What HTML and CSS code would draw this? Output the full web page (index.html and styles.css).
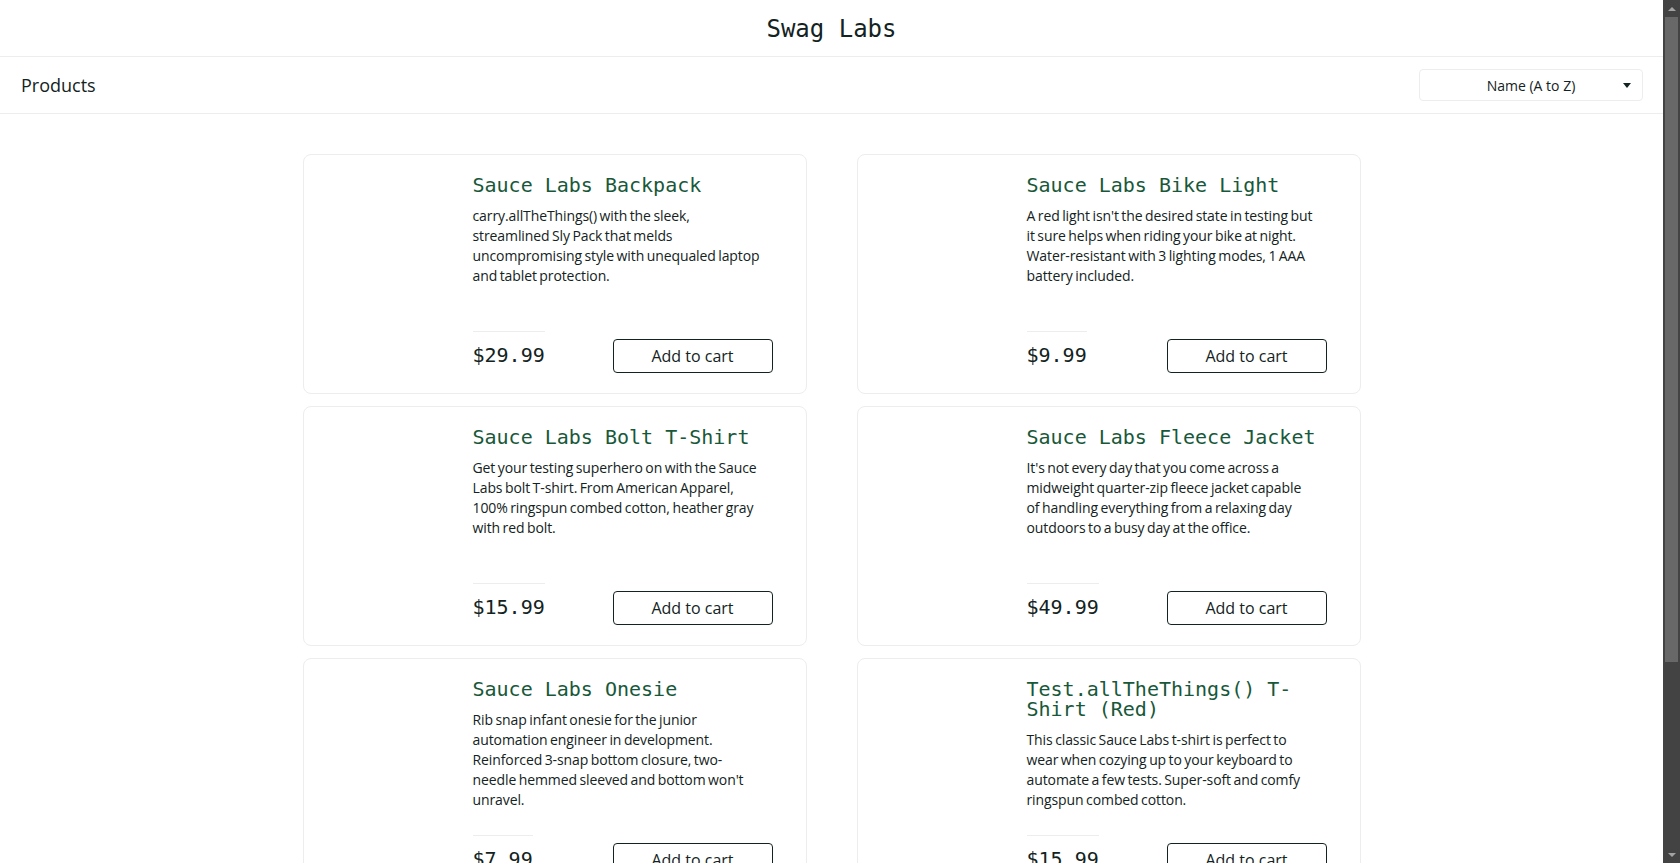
FILE: index.html
```html
<!DOCTYPE html>
<html lang="en">
<head>
<meta charset="utf-8">
<title>Swag Labs</title>
<link rel="stylesheet" href="styles.css">
</head>
<body>
<div class="app">
  <div class="page">
    <header class="primary-header">
      <div class="app-logo">Swag Labs</div>
    </header>
    <div class="secondary-header">
      <span class="title">Products</span>
      <div class="sort">
        <span></span>
        <span class="sort-label">Name (A to Z)</span>
        <svg class="sort-caret" width="8" height="5" viewBox="0 0 8 5"><path d="M0 0H8L4 5Z" fill="#132322"/></svg>
      </div>
    </div>
    <main class="inventory">
      <div class="inventory-list">
        <div class="item">
          <div class="item-img"></div>
          <div class="item-details">
            <div class="item-name">Sauce Labs Backpack</div>
            <div class="item-desc">carry.allTheThings() with the sleek, streamlined Sly Pack that melds uncompromising style with unequaled laptop and tablet protection.</div>
            <div class="pricebar">
              <div class="item-price">$29.99</div>
              <button class="btn">Add to cart</button>
            </div>
          </div>
        </div>
        <div class="item">
          <div class="item-img"></div>
          <div class="item-details">
            <div class="item-name">Sauce Labs Bike Light</div>
            <div class="item-desc">A red light isn't the desired state in testing but it sure helps when riding your bike at night. Water-resistant with 3 lighting modes, 1 AAA battery included.</div>
            <div class="pricebar">
              <div class="item-price">$9.99</div>
              <button class="btn">Add to cart</button>
            </div>
          </div>
        </div>
        <div class="item">
          <div class="item-img"></div>
          <div class="item-details">
            <div class="item-name">Sauce Labs Bolt T-Shirt</div>
            <div class="item-desc">Get your testing superhero on with the Sauce Labs bolt T-shirt. From American Apparel, 100% ringspun combed cotton, heather gray with red bolt.</div>
            <div class="pricebar">
              <div class="item-price">$15.99</div>
              <button class="btn">Add to cart</button>
            </div>
          </div>
        </div>
        <div class="item">
          <div class="item-img"></div>
          <div class="item-details">
            <div class="item-name">Sauce Labs Fleece Jacket</div>
            <div class="item-desc">It's not every day that you come across a midweight quarter-zip fleece jacket capable of handling everything from a relaxing day outdoors to a busy day at the office.</div>
            <div class="pricebar">
              <div class="item-price">$49.99</div>
              <button class="btn">Add to cart</button>
            </div>
          </div>
        </div>
        <div class="item">
          <div class="item-img"></div>
          <div class="item-details">
            <div class="item-name">Sauce Labs Onesie</div>
            <div class="item-desc">Rib snap infant onesie for the junior automation engineer in development. Reinforced 3-snap bottom closure, two-needle hemmed sleeved and bottom won't unravel.</div>
            <div class="pricebar">
              <div class="item-price">$7.99</div>
              <button class="btn">Add to cart</button>
            </div>
          </div>
        </div>
        <div class="item">
          <div class="item-img"></div>
          <div class="item-details">
            <div class="item-name">Test.allTheThings() T-Shirt (Red)</div>
            <div class="item-desc">This classic Sauce Labs t-shirt is perfect to wear when cozying up to your keyboard to automate a few tests. Super-soft and comfy ringspun combed cotton.</div>
            <div class="pricebar">
              <div class="item-price">$15.99</div>
              <button class="btn">Add to cart</button>
            </div>
          </div>
        </div>
      </div>
    </main>
  </div>
  <div class="scrollbar" aria-hidden="true">
    <div class="sb-btn">
      <svg width="8" height="4" viewBox="0 0 8 4"><path d="M0 4H8L4 0Z" fill="#a3a3a3"/></svg>
    </div>
    <div class="sb-track"><div class="sb-thumb"></div></div>
    <div class="sb-btn">
      <svg width="8" height="4" viewBox="0 0 8 4"><path d="M0 0H8L4 4Z" fill="#a3a3a3"/></svg>
    </div>
  </div>
</div>
</body>
</html>
```

FILE: styles.css
```css
html, body {
  margin: 0;
  height: 100%;
  overflow: hidden;
  background: #fff;
}

body {
  font-family: "Open Sans", "Inter", sans-serif;
  color: #132322;
}

.app {
  display: flex;
  height: 100vh;
}

.page {
  flex: 1;
  min-width: 0;
  overflow: hidden;
}

.primary-header {
  height: 56px;
  border-bottom: 1px solid #ededed;
  display: flex;
  align-items: center;
  justify-content: center;
}

.app-logo {
  font-family: "DejaVu Sans Mono", monospace;
  font-size: 24px;
  line-height: 24px;
  color: #132322;
  padding-top: 2px;
}

.secondary-header {
  height: 56px;
  border-bottom: 1px solid #ededed;
  display: flex;
  align-items: center;
  justify-content: space-between;
  padding: 0 20px 0 21px;
}

.title {
  font-size: 18px;
  font-weight: 500;
  color: #132322;
}

.sort {
  width: 224px;
  height: 32px;
  box-sizing: border-box;
  border: 1px solid #ededed;
  border-radius: 4px;
  display: grid;
  grid-template-columns: 1fr auto 1fr;
  align-items: center;
  font-size: 14px;
  color: #132322;
}

.sort-caret {
  justify-self: end;
  margin-right: 11px;
}

.inventory {
  padding-top: 40px;
}

.inventory-list {
  display: grid;
  grid-template-columns: 504px 504px;
  column-gap: 50px;
  row-gap: 12px;
  justify-content: center;
}

.item {
  height: 240px;
  box-sizing: border-box;
  border: 1px solid #ededed;
  border-radius: 8px;
  padding: 20px 33px 20px 20px;
  display: flex;
}

.item-img {
  width: 149px;
  flex: none;
}

.item-details {
  flex: 1;
  display: flex;
  flex-direction: column;
}

.item-name {
  font-family: "DejaVu Sans Mono", monospace;
  font-size: 20px;
  line-height: 20px;
  color: #18583a;
}

.item-desc {
  margin-top: 11px;
  margin-right: 12px;
  font-size: 14px;
  line-height: 20px;
  letter-spacing: -0.1px;
  word-spacing: -1px;
  color: #132322;
}

.pricebar {
  margin-top: auto;
  display: flex;
  justify-content: space-between;
  align-items: flex-end;
}

.item-price {
  font-family: "DejaVu Sans Mono", monospace;
  font-size: 20px;
  line-height: 20px;
  font-weight: 500;
  color: #132322;
  border-top: 1px solid #ededed;
  padding: 13px 0 8px;
}

.btn {
  width: 160px;
  height: 34px;
  box-sizing: border-box;
  border: 1px solid #132322;
  border-radius: 4px;
  background: #fff;
  color: #132322;
  font-family: inherit;
  font-size: 16px;
  padding: 0;
}

.scrollbar {
  width: 17px;
  flex: none;
  background: #434343;
  display: flex;
  flex-direction: column;
}

.sb-btn {
  height: 17px;
  display: flex;
  align-items: center;
  justify-content: center;
}

.sb-track {
  flex: 1;
  padding: 0 2px;
}

.sb-thumb {
  height: 645px;
  background: #686868;
}
```
